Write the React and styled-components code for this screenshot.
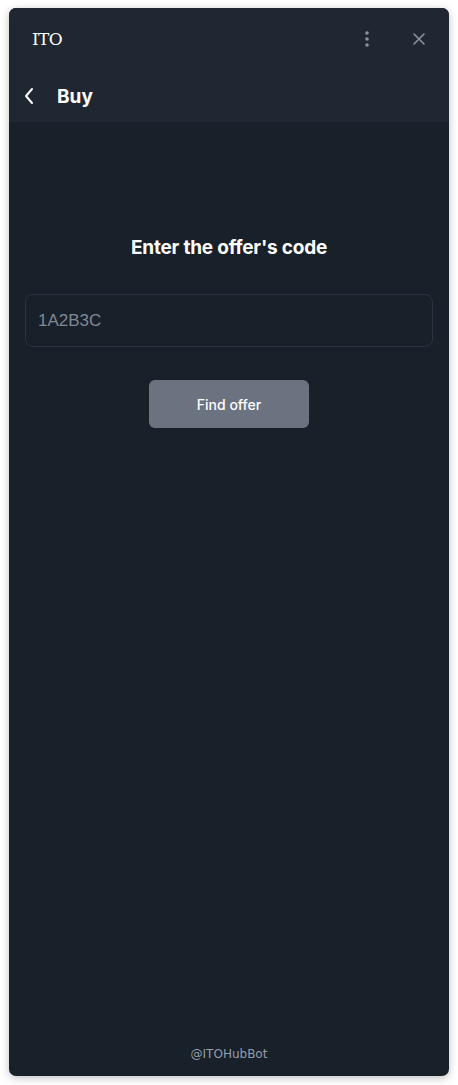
import React, { useState } from "react";
import styled, { createGlobalStyle } from "styled-components";

const GlobalStyle = createGlobalStyle`
  html, body {
    margin: 0;
    padding: 0;
    background: #ffffff;
  }
  * {
    box-sizing: border-box;
  }
`;

const Page = styled.div`
  padding: 8px 9px 9px 9px;
`;

const Window = styled.div`
  height: 1068px;
  border-radius: 7px;
  overflow: hidden;
  background: #18202a;
  box-shadow: 0 2px 8px rgba(0, 0, 0, 0.25);
  display: flex;
  flex-direction: column;
`;

const Header = styled.div`
  background: #1f2733;
`;

const TitleBar = styled.div`
  height: 62px;
  display: flex;
  align-items: center;
  padding: 0 18px 0 23px;
`;

const AppName = styled.div`
  flex: 1;
  font-family: "DejaVu Serif", "Liberation Serif", serif;
  font-size: 17px;
  color: #ffffff;
  letter-spacing: -0.6px;
`;

const IconButton = styled.button`
  background: none;
  border: none;
  padding: 0;
  width: ${(p) => p.$w}px;
  height: 24px;
  display: flex;
  align-items: center;
  justify-content: center;
  color: #8a929e;
  cursor: pointer;
  margin-left: ${(p) => p.$ml || 0}px;
`;

const NavBar = styled.div`
  height: 52px;
  display: flex;
  align-items: center;
  padding: 0 8px;
`;

const BackButton = styled.button`
  background: none;
  border: none;
  padding: 0;
  width: 24px;
  height: 24px;
  display: flex;
  align-items: center;
  justify-content: center;
  color: #ffffff;
  cursor: pointer;
`;

const PageTitle = styled.div`
  margin-left: 16px;
  font-family: Inter, "Liberation Sans", sans-serif;
  font-weight: 700;
  font-size: 19px;
  color: #ffffff;
`;

const Content = styled.div`
  flex: 1;
  display: flex;
  flex-direction: column;
  align-items: center;
  padding: 114px 16px 14px 16px;
`;

const Heading = styled.h2`
  margin: 0;
  font-family: Inter, "Liberation Sans", sans-serif;
  font-weight: 700;
  font-size: 19px;
  line-height: 24px;
  color: #ffffff;
  letter-spacing: -0.2px;
`;

const CodeInput = styled.input`
  margin-top: 34px;
  width: 100%;
  height: 53px;
  background: transparent;
  border: 1px solid #2b3440;
  border-radius: 8px;
  padding: 0 12px;
  font-family: "Liberation Sans", Arial, sans-serif;
  font-size: 17px;
  color: #ffffff;
  outline: none;
  &::placeholder {
    color: #808994;
  }
`;

const FindButton = styled.button`
  margin-top: 33px;
  width: 160px;
  height: 48px;
  border: none;
  border-radius: 6px;
  background: #6b7280;
  color: #ffffff;
  font-family: Inter, "Liberation Sans", sans-serif;
  font-weight: 500;
  font-size: 14px;
  cursor: pointer;
`;

const Footer = styled.div`
  margin-top: auto;
  font-family: "DejaVu Sans", "Noto Sans", sans-serif;
  font-size: 12px;
  line-height: 16px;
  color: #979ea8;
`;

const App = () => {
  const [code, setCode] = useState("");

  return (
    <Page>
      <GlobalStyle />
      <Window>
        <Header>
          <TitleBar>
            <AppName>ITO</AppName>
            <IconButton $w={16}>
              <svg width="4" height="16" viewBox="0 0 4 16" fill="currentColor">
                <circle cx="2" cy="2" r="1.8" />
                <circle cx="2" cy="8" r="1.8" />
                <circle cx="2" cy="14" r="1.8" />
              </svg>
            </IconButton>
            <IconButton $w={24} $ml={32}>
              <svg width="14" height="14" viewBox="0 0 14 14" stroke="currentColor" strokeWidth="1.6" strokeLinecap="round">
                <path d="M2 2l10 10M12 2L2 12" />
              </svg>
            </IconButton>
          </TitleBar>
          <NavBar>
            <BackButton>
              <svg width="12" height="18" viewBox="0 0 12 18" fill="none" stroke="currentColor" strokeWidth="2" strokeLinecap="round" strokeLinejoin="round">
                <path d="M9 2L3 9l6 7" />
              </svg>
            </BackButton>
            <PageTitle>Buy</PageTitle>
          </NavBar>
        </Header>
        <Content>
          <Heading>Enter the offer's code</Heading>
          <CodeInput
            placeholder="1A2B3C"
            value={code}
            onChange={(e) => setCode(e.target.value)}
          />
          <FindButton>Find offer</FindButton>
          <Footer>@ITOHubBot</Footer>
        </Content>
      </Window>
    </Page>
  );
};

export default App;
